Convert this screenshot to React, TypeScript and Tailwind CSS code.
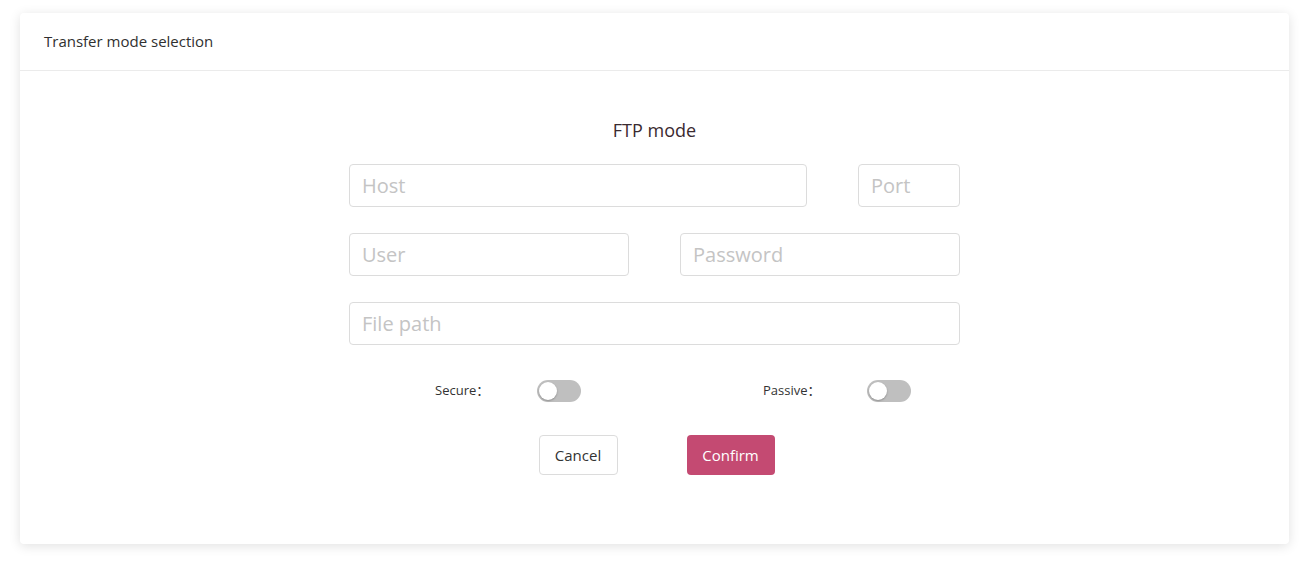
import React from 'react';

function Toggle() {
  return (
    <div className="relative w-[44px] h-[22px] rounded-full bg-[#bfbfbf]">
      <div className="absolute left-[2px] top-[2px] w-[18px] h-[18px] rounded-full bg-white shadow-[0_1px_2px_rgba(0,0,0,0.25)]" />
    </div>
  );
}

function Field({ placeholder, className }: { placeholder: string; className: string }) {
  return (
    <input
      type="text"
      placeholder={placeholder}
      className={`h-[43px] border border-[#dcdcdc] rounded-[4px] px-[12px] text-[20px] text-[#333] placeholder:text-[#c4c4c4] outline-none ${className}`}
    />
  );
}

export default function App() {
  return (
    <div className="w-[1315px] h-[564px] bg-white pt-[13px] px-[20px]" style={{ fontFamily: '"Open Sans", "Noto Sans CJK SC", sans-serif' }}>
      <div className="w-[1269px] h-[531px] bg-white rounded-[4px] shadow-[0_2px_12px_rgba(0,0,0,0.12)] flex flex-col">
        <div className="h-[58px] border-b border-[#ebebeb] flex items-center px-[24px] text-[15px] text-[#303030]">
          Transfer mode selection
        </div>
        <div className="flex flex-col items-center pt-[47px]">
          <div className="text-[18px] text-[#3a2a30] leading-[24px] mb-[22px]">FTP mode</div>
          <div className="w-[611px] flex flex-col gap-[26px]">
            <div className="flex justify-between">
              <Field placeholder="Host" className="w-[458px]" />
              <Field placeholder="Port" className="w-[102px]" />
            </div>
            <div className="flex justify-between">
              <Field placeholder="User" className="w-[280px]" />
              <Field placeholder="Password" className="w-[280px]" />
            </div>
            <Field placeholder="File path" className="w-full" />
          </div>
          <div className="w-[611px] flex items-center mt-[35px] text-[13px] text-[#333]">
            <div className="ml-[86px] w-[102px]">Secure：</div>
            <Toggle />
            <div className="ml-[182px] w-[104px]">Passive：</div>
            <Toggle />
          </div>
          <div className="flex gap-[69px] mt-[33px] ml-[4px]">
            <button className="w-[79px] h-[40px] border border-[#dcdcdc] rounded-[4px] text-[15px] text-[#333] bg-white">
              Cancel
            </button>
            <button className="w-[88px] h-[40px] rounded-[4px] text-[15px] text-white bg-[#c44a72]">
              Confirm
            </button>
          </div>
        </div>
      </div>
    </div>
  );
}
